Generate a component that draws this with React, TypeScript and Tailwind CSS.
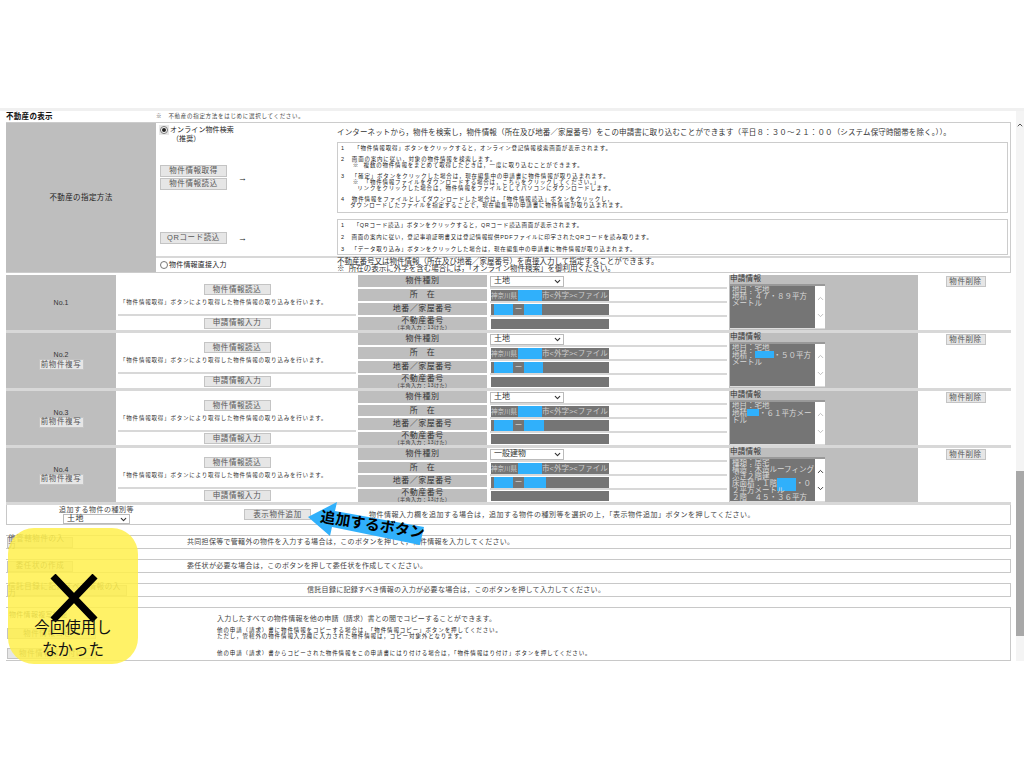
import { ChevronDown, ChevronUp } from "lucide-react";

const btn =
  "flex items-center justify-center bg-[#e6e6e6] border border-[#c4c4c4] text-[#555] text-[7.5px] tracking-[0.6px] leading-none";

function Btn({ label, className }: { label: string; className: string }) {
  return <div className={`${btn} ${className}`}>{label}</div>;
}

function Select({ value, className }: { value: string; className: string }) {
  return (
    <div className={`flex items-center justify-between bg-white border border-[#bbb] pl-[3px] pr-[1px] text-[8px] text-[#333] ${className}`}>
      <span>{value}</span>
      <ChevronDown className="size-[9px] text-[#333]" strokeWidth={3} />
    </div>
  );
}

function Blue({ className }: { className: string }) {
  return <span className={`block h-full bg-[#30b0fb] ${className}`} />;
}

type Item = {
  no: string;
  copy: boolean;
  kind: string;
  height: string;
  blue2: string;
  info: React.ReactNode;
  active?: boolean;
};

const items: Item[] = [
  {
    no: "No.1",
    copy: false,
    kind: "土地",
    height: "h-[58px]",
    blue2: "w-[18px]",
    info: (
      <>
        地目：宅地
        <br />
        地積：４７・８９平方
        <br />
        メートル
      </>
    ),
  },
  {
    no: "No.2",
    copy: true,
    kind: "土地",
    height: "h-[58px]",
    blue2: "w-[19px]",
    info: (
      <>
        地目：宅地
        <br />
        地積：<span className="inline-block w-[19px] h-[7px] bg-[#30b0fb]" />・５０平方
        <br />
        メートル
      </>
    ),
  },
  {
    no: "No.3",
    copy: true,
    kind: "土地",
    height: "h-[57px]",
    blue2: "w-[20px]",
    info: (
      <>
        地目：宅地
        <br />
        地積<span className="inline-block w-[12px] h-[7px] bg-[#30b0fb]" />・６１平方メー
        <br />
        トル
      </>
    ),
  },
  {
    no: "No.4",
    copy: true,
    kind: "一般建物",
    height: "h-[57px]",
    blue2: "w-[22px]",
    active: true,
    info: (
      <>
        種類：居宅
        <br />
        構造：木造ルーフィング
        <br />
        ぶき２階建
        <br />
        床面積：１階<span className="inline-block w-[19px] h-[13px] -my-[4px] bg-[#30b0fb] align-middle" />・０
        <br />
        ２平方メートル
        <br />
        ２階　４５・３６平方
      </>
    ),
  },
];

function Label({ children }: { children: React.ReactNode }) {
  return (
    <div className="flex-1 flex flex-col items-center justify-center bg-[#bebebe] text-[8px] tracking-[0.5px] leading-[8px] text-[#333]">
      {children}
    </div>
  );
}

function ItemRow({ item }: { item: Item }) {
  return (
    <div className={`flex ${item.height} gap-[2px] border-b-[3px] border-[#d8d8d8] text-[#333]`}>
      <div className="w-[110px] bg-[#bebebe] flex flex-col items-center justify-center text-[7px] leading-[8px]">
        <span>{item.no}</span>
        {item.copy && <Btn label="前物件複写" className="w-[45px] h-[11px]" />}
      </div>
      <div className="w-[238px] flex flex-col">
        <div className="h-[41px] flex flex-col items-center pt-[9px] border-b-[2px] border-[#d8d8d8]">
          <Btn label="物件情報読込" className="w-[67px] h-[11px]" />
          <p className="self-start pl-[2px] mt-[3px] text-[5.5px] tracking-[0.8px] leading-[8px] whitespace-nowrap">
            「物件情報取得」ボタンにより取得した物件情報の取り込みを行います。
          </p>
        </div>
        <div className="flex-1 flex items-center justify-center">
          <Btn label="申請情報入力" className="w-[67px] h-[11px]" />
        </div>
      </div>
      <div className="w-[129px] flex flex-col gap-[2px]">
        <Label>物件種別</Label>
        <Label>所　在</Label>
        <Label>地番／家屋番号</Label>
        <Label>
          <span>不動産番号</span>
          <span className="text-[5px] leading-[5px]">（半角入力：13けた）</span>
        </Label>
      </div>
      <div className="w-[238px] flex flex-col pl-[1px]">
        <div className="h-[14px] flex items-center border-b-[2px] border-[#d8d8d8]">
          <Select value={item.kind} className="w-[74px] h-[11px]" />
        </div>
        <div className="h-[14px] flex items-center border-b-[2px] border-[#d8d8d8]">
          <div className="w-[118px] h-[11px] ml-[1px] bg-[#757575] flex text-[#ccc] text-[7.5px] leading-[11px] overflow-hidden whitespace-nowrap">
            <span className="w-[27px] shrink-0 text-[6.5px]">神奈川県</span>
            <Blue className="w-[24px] shrink-0" />
            <span>市&lt;外字&gt;&lt;ファイル</span>
          </div>
        </div>
        <div className="h-[14px] flex items-center border-b-[2px] border-[#d8d8d8]">
          <div className="w-[118px] h-[11px] ml-[1px] bg-[#757575] flex text-[#ccc] text-[7.5px] leading-[11px]">
            <span className="w-[3px] shrink-0" />
            <Blue className="w-[19px] shrink-0" />
            <span className="w-[11px] shrink-0 text-center">ー</span>
            <Blue className={`${item.blue2} shrink-0`} />
          </div>
        </div>
        <div className="flex-1 flex items-center">
          <div className="w-[118px] h-[10px] ml-[1px] bg-[#757575]" />
        </div>
      </div>
      <div className="w-[189px] bg-[#bebebe] flex flex-col pl-[1px] leading-[8px] text-[7.5px] tracking-[0.3px]">
        <span className="h-[9px]">申請情報</span>
        <div className="flex w-[95px] h-[45px] border-t-[2px] border-[#999] border-b border-b-[#ddd]">
          <div className="w-[85px] h-full bg-[#757575] text-[#d8d8d8] pl-[2px] text-[7.5px] tracking-[0px] leading-[7px] overflow-hidden whitespace-nowrap">
            {item.info}
          </div>
          <div className={`w-[10px] bg-white flex flex-col items-center justify-between py-[8px] ${item.active ? "text-[#333]" : "text-[#bbb]"}`}>
            <ChevronUp className="size-[9px]" strokeWidth={2.5} />
            <ChevronDown className="size-[9px]" strokeWidth={2.5} />
          </div>
        </div>
      </div>
      <div className="flex-1 flex justify-center pt-[1px]">
        <Btn label="物件削除" className="w-[40px] h-[11px]" />
      </div>
    </div>
  );
}

function Bar({
  button,
  btnW,
  textPl,
  text,
}: {
  button: string;
  btnW: string;
  textPl: string;
  text: string;
}) {
  return (
    <div className="flex items-center h-[14px] border-y border-[#c8c8c8] border-r text-[7px] tracking-[0.3px] text-[#444]">
      <Btn label={button} className={`h-[11px] shrink-0 ml-[1px] ${btnW}`} />
      <p className={`whitespace-nowrap ${textPl}`}>{text}</p>
    </div>
  );
}

function Radio({ on }: { on: boolean }) {
  return (
    <span className="w-[8px] h-[8px] rounded-full border border-[#777] bg-white flex items-center justify-center shrink-0">
      {on && <span className="block w-[4px] h-[4px] rounded-full bg-[#222]" />}
    </span>
  );
}

export default function App() {
  return (
    <div className="relative w-[1024px] h-[768px] overflow-hidden bg-white font-['Liberation_Sans','Noto_Sans_CJK_JP',sans-serif] text-[#222]">
      <div className="h-[108px]" />
      <div className="h-[3px] bg-[#f0f0f0]" />
      <div className="flex h-[550px]">
        <main className="w-[1011px] pl-[6px] flex flex-col">
          {/* title */}
          <div className="h-[11px] flex items-center text-[#111]">
            <b className="w-[150px] text-[7.5px] font-bold tracking-[0.3px]">不動産の表示</b>
            <span className="text-[5.5px] tracking-[0.7px] text-[#444]">※　不動産の指定方法をはじめに選択してください。</span>
          </div>

          {/* method */}
          <div className="flex h-[151px] border-y border-r border-[#ccc]">
            <div className="w-[150px] bg-[#bebebe] flex items-center justify-center text-[7.5px] tracking-[0.4px]">
              不動産の指定方法
            </div>
            <div className="flex-1 flex flex-col">
              <div className="h-[135px] flex border-b-[2px] border-[#d8d8d8]">
                <div className="w-[181px] pl-[3px] pt-[2px] flex flex-col text-[7px] leading-[8px] tracking-[0.1px]">
                  <div className="flex items-center gap-[1px]">
                    <span className="bg-[#e8e8e8] p-[1px]">
                      <Radio on />
                    </span>
                    <span>オンライン物件検索</span>
                  </div>
                  <span className="pl-[13px]">（推奨）</span>
                  <div className="flex items-center gap-[11px] mt-[22px] pl-[1px]">
                    <div className="flex flex-col gap-[1px]">
                      <Btn label="物件情報取得" className="w-[67px] h-[12px]" />
                      <Btn label="物件情報読込" className="w-[67px] h-[12px]" />
                    </div>
                    <span className="text-[9px]">→</span>
                  </div>
                  <div className="flex items-center gap-[11px] mt-[42px] pl-[1px]">
                    <Btn label="QRコード読込" className="w-[67px] h-[12px]" />
                    <span className="text-[9px]">→</span>
                  </div>
                </div>
                <div className="flex-1 pr-[2px] flex flex-col">
                  <p className="h-[19px] pt-[5px] text-[7.5px] leading-[9px] tracking-[0.13px] whitespace-nowrap text-[#333]">
                    インターネットから，物件を検索し，物件情報（所在及び地番／家屋番号）をこの申請書に取り込むことができます（平日８：３０～２１：００（システム保守時間帯を除く。））。
                  </p>
                  <div className="h-[71px] border border-[#ccc] pl-[3px] pt-[2px] flex flex-col gap-[5px] text-[5.5px] leading-[6px] tracking-[0.8px] whitespace-pre text-[#222]">
                    <p>{`1    「物件情報取得」ボタンをクリックすると，オンライン登記情報検索画面が表示されます。`}</p>
                    <p>{`2   画面の案内に従い，対象の物件情報を検索します。
     ※  複数の物件情報をまとめて取得したときは，一度に取り込むことができます。`}</p>
                    <p>{`3   「確定」ボタンをクリックした場合は，現在編集中の申請書に物件情報が取り込まれます。
     ※  「物件情報ファイルをダウンロードする場合は，こちらをクリックしてください。」
       リンクをクリックした場合は，物件情報をファイルとしてパソコンにダウンロードします。`}</p>
                    <p>{`4   物件情報をファイルとしてダウンロードした場合は，「物件情報読込」ボタンをクリックし，
    ダウンロードしたファイルを指定することで，現在編集中の申請書に物件情報が取り込まれます。`}</p>
                  </div>
                  <div className="h-[36px] mt-[6px] border border-[#ccc] pl-[3px] pt-[2px] text-[5.5px] leading-[6px] tracking-[0.7px] whitespace-pre text-[#222]">
                    {`1    「QRコード読込」ボタンをクリックすると，QRコード読込画面が表示されます。

2   画面の案内に従い，登記事項証明書又は登記情報提供PDFファイルに印字されたQRコードを読み取ります。

3   「データ取り込み」ボタンをクリックした場合は，現在編集中の申請書に物件情報が取り込まれます。`}
                  </div>
                </div>
              </div>
              <div className="flex-1 flex">
                <div className="w-[181px] pl-[4px] flex items-center gap-[1px] text-[7px] tracking-[0.2px]">
                  <Radio on={false} />
                  <span>物件情報直接入力</span>
                </div>
                <p className="text-[7.5px] leading-[7px] tracking-[0px] whitespace-pre text-[#333]">
                  {`不動産番号又は物件情報（所在及び地番／家屋番号）を直接入力して指定することができます。
※  所在の表示に外字を含む場合には，「オンライン物件検索」を御利用ください。`}
                </p>
              </div>
            </div>
          </div>

          {/* items */}
          <div className="flex flex-col mt-[2px]">
            {items.map((item) => (
              <ItemRow key={item.no} item={item} />
            ))}
          </div>

          {/* add */}
          <div className="flex h-[20px] border-b border-r border-[#c8c8c8] border-l text-[7px] tracking-[0.5px] text-[#444]">
            <div className="w-[179px] flex flex-col items-center leading-[8px] pt-[1px]">
              <span>追加する物件の種別等</span>
              <Select value="土地" className="w-[67px] h-[10px]" />
            </div>
            <div className="pl-[58px] pt-[4px]">
              <Btn label="表示物件追加" className="w-[67px] h-[11px]" />
            </div>
            <p className="pl-[58px] pt-[5px] leading-[10px] whitespace-nowrap">
              物件情報入力欄を追加する場合は，追加する物件の種別等を選択の上，「表示物件追加」ボタンを押してください。
            </p>
          </div>

          {/* action bars */}
          <div className="flex flex-col gap-[10px] mt-[10px]">
            <Bar
              button="他管轄物件の入力"
              btnW="w-[66px]"
              textPl="pl-[114px]"
              text="共同担保等で管轄外の物件を入力する場合は，このボタンを押して，物件情報を入力してください。"
            />
            <Bar
              button="委任状の作成"
              btnW="w-[66px]"
              textPl="pl-[114px]"
              text="委任状が必要な場合は，このボタンを押して委任状を作成してください。"
            />
            <Bar
              button="信託目録に記録すべき情報の入力"
              btnW="w-[120px]"
              textPl="pl-[180px]"
              text="信託目録に記録すべき情報の入力が必要な場合は，このボタンを押して入力してください。"
            />
            <div className="flex h-[54px] border-y border-r border-[#c8c8c8] text-[#444]">
              <div className="w-[211px] pl-[1px] flex flex-col text-[7px] tracking-[0.3px]">
                <span className="pl-[2px] pt-[2px] leading-[10px]">物件情報複写機能</span>
                <Btn label="物件情報コピー" className="w-[89px] h-[11px] mt-[8px]" />
                <Btn label="物件情報はり付け" className="w-[89px] h-[11px] mt-[9px]" />
              </div>
              <div className="flex flex-col pt-[6px] whitespace-pre">
                <p className="text-[7px] tracking-[0.2px] leading-[10px]">
                  入力したすべての物件情報を他の申請（請求）書との間でコピーすることができます。
                </p>
                <p className="text-[5.5px] tracking-[0.9px] leading-[6px] mt-[3px] text-[#222]">
                  {`他の申請（請求）書に物件情報をコピーする場合は，「物件情報コピー」ボタンを押してください。
ただし，管轄外の物件情報入力欄に入力された物件情報は，コピー対象外となります。`}
                </p>
                <p className="text-[5.5px] tracking-[0.9px] leading-[6px] mt-[11px] text-[#222]">
                  他の申請（請求）書からコピーされた物件情報をこの申請書にはり付ける場合は，「物件情報はり付け」ボタンを押してください。
                </p>
              </div>
            </div>
          </div>
        </main>

        {/* scrollbar */}
        <div className="w-[13px] pl-[5px] flex flex-col bg-white">
          <div className="flex-1 bg-[#f4f4f4] flex flex-col">
            <ChevronUp className="size-[8px] mt-[10px] text-[#555]" strokeWidth={3} />
            <div className="h-[342px]" />
            <div className="h-[165px] bg-[#a8a8a8]" />
          </div>
        </div>
      </div>

      {/* yellow note */}
      <div className="absolute left-[8px] top-[528px] w-[130px] h-[136px] rounded-[26px] bg-[#fff04c]/85 flex flex-col items-center justify-end pb-[3px] text-[15.5px] leading-[22px] text-[#111]">
        <svg className="absolute left-[41px] top-[46px]" width="50" height="50" viewBox="0 0 50 50">
          <path d="M4 2 L46 46 M46 2 L4 46" stroke="#000" strokeWidth="7" />
        </svg>
        <span className="relative">今回使用し</span>
        <span className="relative">なかった</span>
      </div>

      {/* arrow callout */}
      <svg className="absolute left-[300px] top-[495px]" width="135" height="60" viewBox="300 495 135 60">
        <polygon points="308,517 337,502 335,511 424,527 420,545 332,527 330,536" fill="#30b0fb" />
      </svg>
      <div className="absolute left-[320px] top-[516px] rotate-[9deg] text-[15px] leading-[18px] font-bold text-black whitespace-nowrap">
        追加するボタン
      </div>
    </div>
  );
}
